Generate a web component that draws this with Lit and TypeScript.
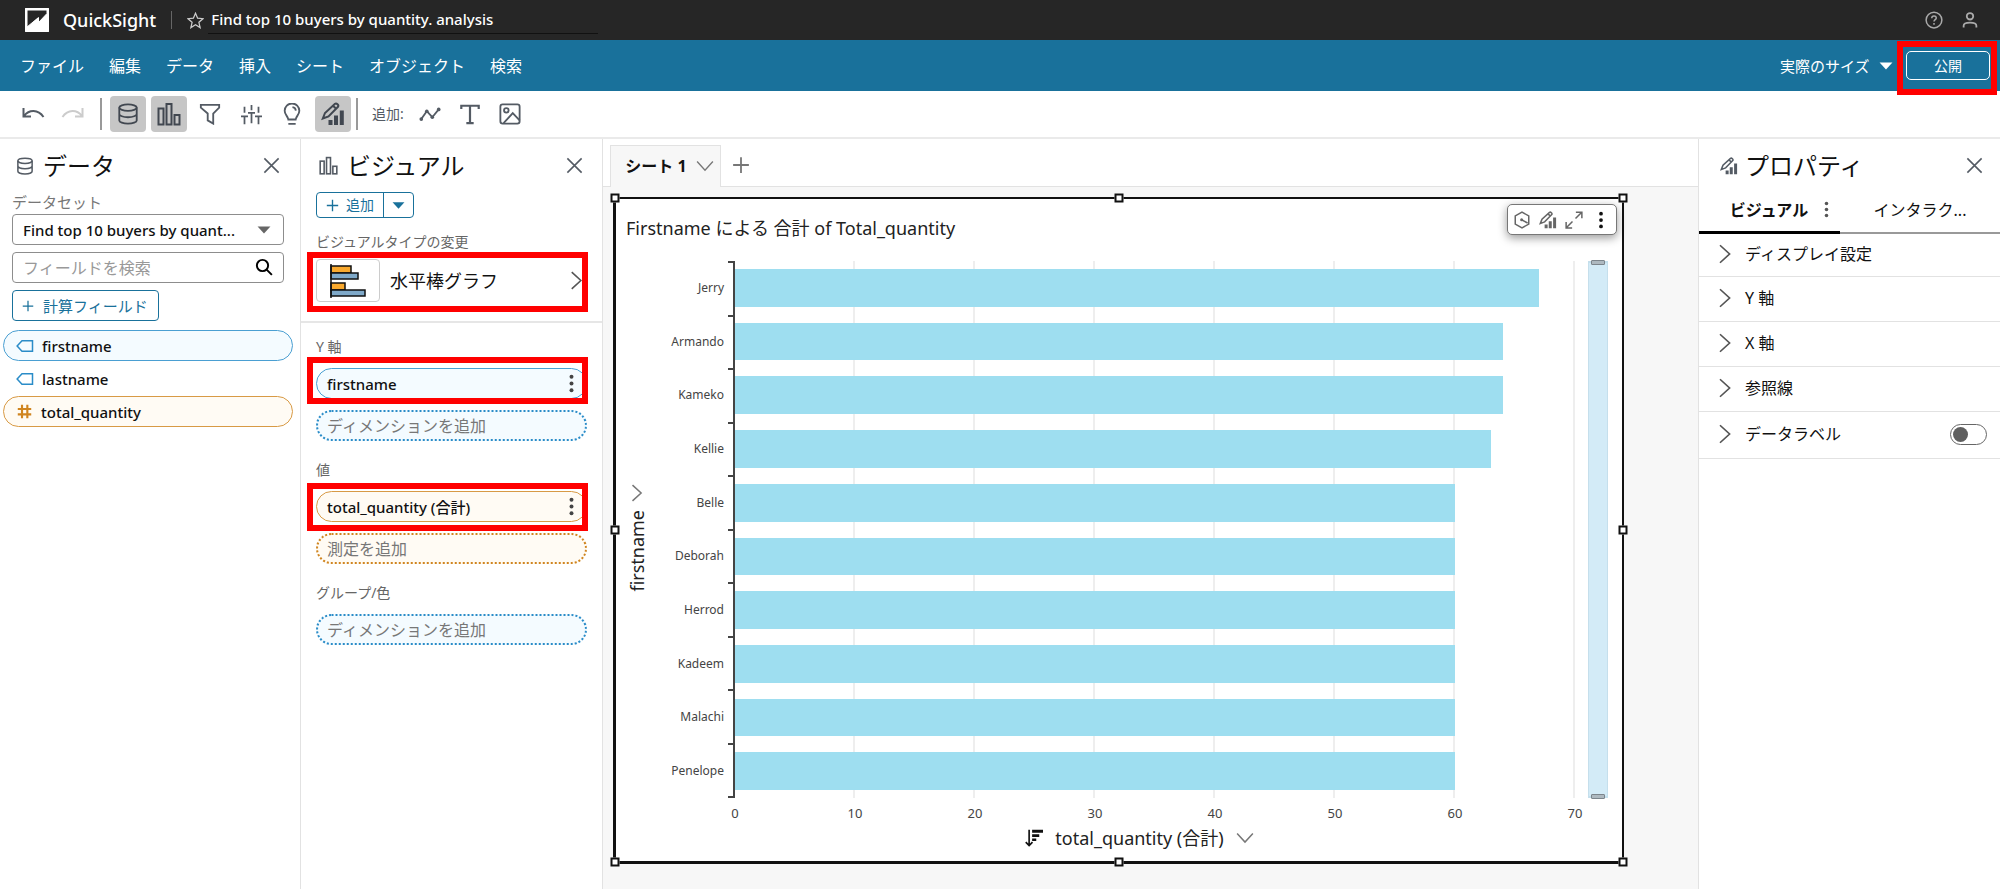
import { LitElement, html, css, svg, nothing } from "lit";
import { customElement, property } from "lit/decorators.js";

const shared = css`
  *, *::before, *::after { box-sizing: border-box; }
  button, input, select { font: inherit; color: inherit; margin: 0; }
  button { background: none; border: 0; padding: 0; cursor: pointer; display: flex; align-items: center; justify-content: center; }
  svg { display: block; flex: none; fill: none; stroke: currentColor; }
  h1, h2, h3, ul { margin: 0; padding: 0; font-weight: 400; list-style: none; }
`;

const icons: Record<string, unknown> = {
  undo: svg`<path d="M2.500 6v8.500H10M3 14C8 7.500 17 7 22.500 15" stroke-width="2"/>`,
  redo: svg`<path d="M21.500 6v8.500H14M21 14C16 7.500 7 7 1.500 15" stroke-width="2"/>`,
  data: svg`<ellipse cx="12" cy="5" rx="9.500" ry="3.500"/><path d="M2.500 5v14c0 1.900 4.200 3.500 9.500 3.500s9.500-1.600 9.500-3.500V5M2.500 12c0 1.900 4.200 3.500 9.500 3.500s9.500-1.600 9.500-3.500"/>`,
  visual: svg`<rect x="1.500" y="6.500" width="5" height="16"/><rect x="9.500" y="2" width="5" height="20.500"/><rect x="17.500" y="13" width="5" height="9.500"/>`,
  filter: svg`<path d="M2 2h20v3l-6.500 6.500v11l-6-3.500v-7.500L2 5z"/>`,
  sliders: svg`<path d="M4 3v7M0 14h8M4 14v9M12 1v6M8 10h8M12 10v12M20 3v7M16 14h8M20 14v9"/>`,
  bulb: svg`<path d="M8 18c-.5-4-4-5-4-9.500a8 8 0 0 1 16 0c0 4.500-3.500 5.500-4 9.500zM8 22.800h8M12.500 4.500c2 .3 3.500 1.800 3.700 3.800"/>`,
  props: svg`<path d="M1.800 16.500 4 11 14 1.800c1.500-1 4.200 1.400 3 3L7.500 14.500zM12 3.800l3.200 3"/><path fill="currentColor" stroke="none" d="M7.500 18h4v5h-4zM13 13.500h4V23h-4zM18.800 8.500h4V23h-4z"/>`,
  line: svg`<path d="M2.500 17.500 8.500 9l6 6.500L21.500 7" stroke-width="2"/><g fill="currentColor" stroke="none"><circle cx="2.500" cy="17.500" r="2"/><circle cx="8.500" cy="9" r="2"/><circle cx="14.500" cy="15.500" r="2"/><circle cx="21.500" cy="7" r="2"/></g>`,
  text: svg`<path d="M2.500 6.500V3h19v3.500M12 3v19M8 22h8" stroke-width="2.400"/>`,
  image: svg`<rect x="1.500" y="1.500" width="21" height="21" rx="2.500"/><circle cx="8" cy="8" r="2.500"/><path d="m5 22 10-11 7.500 8"/>`,
  close: svg`<path d="m3 3 18 18M21 3 3 21"/>`,
  help: svg`<circle cx="12" cy="12" r="10.500"/><path d="M9 9.500c0-3.800 6-3.800 6-.3 0 2.300-3 2.300-3 4.800M12 16v2.200"/>`,
  user: svg`<circle cx="12" cy="7" r="4.300"/><path d="M3.500 22v-2.500c0-5.500 17-5.500 17 0V22"/>`,
  star: svg`<path d="m12 1.800 3 7 7.500.7-5.700 5 1.700 7.500-6.500-4-6.500 4 1.700-7.500-5.700-5 7.500-.7z"/>`,
  search: svg`<circle cx="10" cy="10" r="7.500"/><path d="m15.500 15.500 7 7"/>`,
  tag: svg`<path d="M8 5h14v14H8l-6.500-7z"/>`,
  hash: svg`<path d="M8.500 2.500v19M16 2.500v19M2.500 8.500h19M2.500 16h19"/>`,
  plus: svg`<path d="M12 1.500v21M1.500 12h21"/>`,
  caret: svg`<path fill="currentColor" stroke="none" d="M1 6h22L12 18z"/>`,
  right: svg`<path d="m6 1.500 11.500 10.500L6 22.500"/>`,
  down: svg`<path d="m1.500 6 10.500 11.500L22.500 6"/>`,
  dots: svg`<g fill="currentColor" stroke="none"><circle cx="12" cy="3.500" r="2.500"/><circle cx="12" cy="12" r="2.500"/><circle cx="12" cy="20.500" r="2.500"/></g>`,
  hexagon: svg`<path d="m12 1.500 9 5v11l-9 5-9-5v-11zM11 11.500l8.500 4.500"/><circle cx="11.500" cy="11.500" r="2" fill="currentColor" stroke="none"/>`,
  expand: svg`<path d="M14 10 22 2M14.500 1.500h8v8M10 14l-8 8M1.500 14.500v8h8"/>`,
  sort: svg`<path d="M5.500 1v21M1 17.500l4.500 4.500 4.500-4.500" stroke-width="2.200"/><path fill="currentColor" stroke="none" d="M9.500 1H24v4H9.500zM9.500 7H19v3.500H9.500zM9.500 12.500H15v3.500H9.500z"/>`,
};

const icon = (name: string, size = 24, stroke = 2) =>
  svg`<svg width=${size} height=${size} viewBox="0 0 24 24" stroke-width=${stroke} aria-hidden="true">${icons[name]}</svg>`;

interface Datum { name: string; value: number; }

@customElement("quantity-chart")
class QuantityChart extends LitElement {
  @property({ attribute: false }) data: Datum[] = [];
  @property({ type: Number }) max = 70;

  static styles = [shared, css`
    :host { flex: 1; display: grid; grid-template-columns: 24px 75px 1fr; grid-template-rows: 1fr auto auto; color: #222; }
    .y-title { grid-row: 1; align-self: center; justify-self: center; display: flex; flex-direction: column; align-items: center; gap: 8px; padding-top: 16px; font-size: 18px; line-height: 24px; }
    .y-title span { writing-mode: vertical-rl; transform: rotate(180deg); }
    .y-title svg, .x-title .chev { color: #777; }
    .names { display: flex; flex-direction: column; font-size: 12px; color: #444; text-align: right; }
    .names li { flex: 1; display: flex; align-items: center; justify-content: flex-end; }
    .plot { display: grid; grid-template-columns: 7px 1fr 24px; padding-left: 4px; }
    .ticks { border-right: 2px solid #444; border-bottom: 2px solid #444; display: flex; flex-direction: column; }
    .ticks i { flex: 1; border-top: 2px solid #444; }
    .area { display: grid; margin-right: 13px; }
    .lines, .bars { grid-area: 1 / 1; display: flex; }
    .lines i { flex: 1; border-right: 2px solid #eee; }
    .bars { flex-direction: column; }
    .bars li { flex: 1; display: flex; padding: 8px 0; }
    .bar { background: #9edef0; }
    .scroll { width: 20px; border: 1px solid #c5dfec; border-width: 2px 1px; background: #d3ebf7; display: flex; flex-direction: column; align-items: center; justify-content: space-between; }
    .grip { width: 14px; height: 5px; margin: -3px 0; border: 1px solid #7c858c; background: #aeb9c0; border-radius: 1px; }
    .numbers { grid-column: 3; display: flex; justify-content: space-between; margin: 6px 27px 0 1px; font-size: 13px; line-height: 18px; color: #444; }
    .numbers li { width: 20px; text-align: center; }
    .x-title { grid-column: 3; display: flex; align-items: center; justify-content: center; gap: 12px; font-size: 18px; line-height: 32px; padding-right: 57px; }
    .x-title svg { color: #111; }
  `];

  render() {
    const marks = Array.from({ length: this.max / 10 + 1 }, (_, i) => i * 10);
    return html`
      <div class="y-title">${icon("right", 18, 2)}<span>firstname</span></div>
      <ul class="names">${this.data.map((d) => html`<li>${d.name}</li>`)}</ul>
      <div class="plot">
        <div class="ticks">${this.data.map(() => html`<i></i>`)}</div>
        <div class="area">
          <div class="lines">${marks.slice(1).map(() => html`<i></i>`)}</div>
          <ul class="bars">
            ${this.data.map((d) => html`<li><div class="bar" style="width:${(d.value / this.max) * 100}%"></div></li>`)}
          </ul>
        </div>
        <div class="scroll"><div class="grip"></div><div class="grip"></div></div>
      </div>
      <ul class="numbers">${marks.map((m) => html`<li>${m}</li>`)}</ul>
      <div class="x-title">${icon("sort", 18)}<span>total_quantity (合計)</span><svg class="chev" width="18" height="18" viewBox="0 0 24 24" stroke-width="2">${icons.down}</svg></div>
    `;
  }
}

@customElement("app-root")
class AppRoot extends LitElement {
  private people: Datum[] = [
    { name: "Jerry", value: 67 }, { name: "Armando", value: 64 }, { name: "Kameko", value: 64 },
    { name: "Kellie", value: 63 }, { name: "Belle", value: 60 }, { name: "Deborah", value: 60 },
    { name: "Herrod", value: 60 }, { name: "Kadeem", value: 60 }, { name: "Malachi", value: 60 },
    { name: "Penelope", value: 60 },
  ];

  static styles = [shared, css`
    :host { display: flex; flex-direction: column; min-height: 100vh; background: #fff; color: #111; font: 15px/20px "Noto Sans", "Noto Sans CJK JP", sans-serif; }
    .top { height: 40px; background: #262626; color: #fff; display: flex; align-items: center; padding: 0 21px 0 25px; }
    .brand { font-size: 18px; font-weight: 500; margin-left: 14px; }
    .rule { width: 1px; height: 18px; background: #666; margin: 0 15px; }
    .top .star { color: #ccc; margin-right: 4px; }
    .name { align-self: stretch; width: 390px; height: 34px; font-size: 15px; line-height: 38px; padding-left: 3px; border-bottom: 1px solid #111; font-weight: 500; }
    .account { margin-left: auto; display: flex; gap: 18px; color: #aaa; }
    .menu { height: 51px; background: #19719b; color: #fff; display: flex; align-items: center; padding: 0 10px 0 20px; }
    .menu nav { display: flex; gap: 25px; font-size: 16px; }
    .menu a { color: inherit; text-decoration: none; }
    .size { margin-left: auto; display: flex; align-items: center; gap: 8px; }
    .size select { appearance: none; background: none; border: 0; padding: 0; }
    .publish { position: relative; margin-left: 13px; }
    .publish button { width: 84px; height: 29px; border: 1px solid #fff; border-radius: 5px; font-size: 14px; }
    .mark::after { content: ""; position: absolute; border: 6px solid #f00; pointer-events: none; inset: -10px -7px -15px -9px; }
    .tools { height: 48px; border-bottom: 2px solid #eaeaea; display: flex; align-items: center; padding-left: 20px; color: #545b64; }
    .tools button { width: 36px; height: 36px; border-radius: 4px; margin-right: 5px; }
    .tools .plain { width: 26px; margin-right: 14px; }
    .tools .faded { color: #ccc; }
    .tools .on { background: #c6c6c6; color: #414750; }
    .tools .sep { width: 2px; height: 32px; background: #999; margin-right: 8px; }
    .tools .add { margin: 0 8px 0 6px; font-size: 14px; width: 32px; white-space: nowrap; }
    .tools .item { margin-right: 4px; }
    .work { flex: 1; display: grid; grid-template-columns: 301px 302px 1fr 302px; }
    .panel { border-right: 1px solid #e2e2e2; display: flex; flex-direction: column; }
    .head { display: flex; align-items: center; gap: 9px; height: 53px; padding: 0 19px 0 16px; color: #545b64; }
    .head h2 { font-size: 24px; line-height: 32px; color: #111; flex: 1; }
    .fields { padding: 0 16px 0 12px; display: flex; flex-direction: column; align-items: flex-start; gap: 7px; color: #111; }
    .fields label { color: #777; margin-bottom: -5px; line-height: 20px; }
    .box { width: 100%; height: 31px; position: relative; display: flex; }
    .box select, .box input { appearance: none; width: 100%; border: 1px solid #8d8d8d; border-radius: 4px; background: #fff; padding: 0 30px 0 10px; }
    .box select { font-weight: 500; }
    .box input { font-size: 16px; }
    .box input::placeholder { color: #999; opacity: 1; }
    .box svg { position: absolute; right: 13px; top: 9px; color: #666; pointer-events: none; }
    .box .dark { color: #000; right: 11px; top: 6px; }
    .calc { height: 31px; border: 1px solid #19719b; border-radius: 4px; color: #19719b; padding: 0 10px 0 9px; gap: 9px; }
    .list { padding: 9px 7px 0 3px; display: flex; flex-direction: column; gap: 2px; }
    .list li { height: 31px; border: 1px solid transparent; border-radius: 16px; display: flex; align-items: center; gap: 8px; padding-left: 12px; font-weight: 500; }
    .dim svg { color: #2a8cc8; }
    .mea svg { color: #d08520; }
    .list .used.dim, .pill.dim { border-color: #4a9fd2; background: #f4fbff; }
    .list .used.mea, .pill.mea { border-color: #d89a45; background: #fffbf4; }
    .head.vis { padding: 0 18px; }
    .head.pro { padding: 0 16px 0 21px; gap: 7px; }
    .split { display: flex; height: 26px; align-self: flex-start; border: 1px solid #19719b; border-radius: 4px; margin-left: 15px; color: #19719b; font-size: 14px; }
    .split button { padding: 0 9px; gap: 7px; }
    .split button + button { border-left: 1px solid #19719b; padding: 0 8px; }
    .small { font-size: 14px; color: #666; font-weight: 400; }
    .type { padding: 14px 15px 19px; border-bottom: 2px solid #e6e6e6; display: flex; flex-direction: column; gap: 7px; }
    .kind { position: relative; display: flex; align-items: center; text-align: left; height: 43px; width: 100%; justify-content: flex-start; font-size: 18px; }
    .kind.mark::after { inset: -7px -1px -10px -9px; }
    .kind .chev { margin-left: auto; margin-right: 1px; color: #555; }
    .thumb { width: 64px; height: 43px; border: 1px solid #ccc; border-radius: 4px; margin-right: 10px; display: flex; align-items: center; justify-content: center; }
    .wells { padding: 14px 15px 0; display: flex; flex-direction: column; gap: 19px; }
    .well { display: flex; flex-direction: column; gap: 11px; }
    .well .drop { width: 100%; height: 31px; border: 2px dotted; border-radius: 16px; justify-content: flex-start; padding-left: 9px; font-size: 16px; }
    .drop span { color: #777; }
    .drop.dim { color: #2a8cc8; background: #f4fbff; }
    .drop.mea { color: #d08520; background: #fffbf4; }
    .pill { position: relative; height: 31px; border: 1px solid; border-radius: 16px; display: flex; align-items: center; justify-content: space-between; padding: 0 5px 0 10px; font-weight: 500; }
    .pill svg { color: #444; }
    .pill.mark::after { inset: -12px -2px -6px -10px; }
    .pill.mea.mark::after { inset: -9px -2px -10px -10px; }
    .canvas { background: #f7f7f7; display: flex; flex-direction: column; }
    .sheets { height: 48px; padding: 6px 0 0 7px; background: #fff; border-bottom: 1px solid #e2e2e2; display: flex; }
    .sheet { height: 42px; width: 111px; border: 1px solid #e2e2e2; border-bottom: 0; background: #f7f7f7; font-size: 16px; font-weight: 700; gap: 9px; padding: 0 0 2px 8px; }
    .sheet svg, .new svg { color: #777; }
    .new { padding: 0 11px 2px; }
    .stage { flex: 1; display: flex; padding: 10px 74px 25px 10px; }
    .card { position: relative; flex: 1; display: flex; flex-direction: column; background: #fff; border: 2px solid #111; border-left-width: 3px; border-bottom-width: 3px; padding: 14px 10px 7px 9px; }
    .card h3 { font-size: 18px; line-height: 30px; color: #222; padding-left: 1px; margin-bottom: 18px; }
    .handle { position: absolute; width: 9px; height: 9px; border: 2px solid #111; background: #fff; transform: translate(-50%, -50%); }
    .n { top: -1px; } .m { top: 50%; } .s { top: calc(100% + 1px); }
    .w { left: -1px; } .c { left: 50%; } .e { left: calc(100% + 1px); }
    .float { position: absolute; top: 5px; right: 5px; height: 31px; width: 110px; border: 1px solid #777; border-radius: 5px; background: #fff; box-shadow: 0 3px 10px #0006; display: flex; align-items: center; gap: 8px; padding-left: 5px; color: #666; }
    .float .more { color: #111; margin-left: 1px; }
    .side { border-left: 1px solid #e2e2e2; }
    .tabs { display: flex; height: 42px; font-size: 16px; }
    .tabs button { flex: 1; border-bottom: 2px solid #999; padding-bottom: 4px; }
    .tabs .active { flex: none; width: 141px; border-bottom: 3px solid #000; font-weight: 700; gap: 10px; padding-left: 26px; }
    .tabs .active svg { color: #555; }
    .row { height: 45px; border-bottom: 1px solid #e2e2e2; display: flex; align-items: center; padding: 0 13px 2px 16px; }
    .row button { gap: 10px; font-size: 16px; }
    .row:first-child { height: 43px; }
    .row:last-child { height: 47px; }
    .row svg { color: #555; }
    .toggle { appearance: none; margin-left: auto; width: 37px; height: 21px; border: 1px solid #666; border-radius: 11px; display: flex; align-items: center; padding: 2px; }
    .toggle::before { content: ""; width: 15px; height: 15px; border-radius: 50%; background: #5f5f5f; }
  `];

  private tool(name: string, label: string, cls = "", size = 24) {
    return html`<button class=${cls} aria-label=${label}>${icon(name, size, 2)}</button>`;
  }

  private well(label: string, kind: string, add: string, value?: string) {
    return html`<div class="well">
      <span class="small">${label}</span>
      ${value ? html`<div class="pill mark ${kind}"><span>${value}</span>${icon("dots", 19)}</div>` : nothing}
      <button class="drop ${kind}"><span>${add}</span></button>
    </div>`;
  }

  render() {
    return html`
      <header class="top">
        <svg width="24" height="24" viewBox="0 0 24 24" stroke="none"><rect width="24" height="24" rx="1" fill="#fff"/><path fill="#262626" d="M2 2h20v3.500L13.500 14.500V9.500L2 19z"/><path fill="#fff" d="m4 19 9-9v6l9-8v14H2z"/></svg>
        <span class="brand">QuickSight</span><span class="rule"></span>
        <button class="star" aria-label="お気に入り">${icon("star", 17, 1.8)}</button>
        <h1 class="name">Find top 10 buyers by quantity. analysis</h1>
        <div class="account">
          <button aria-label="ヘルプ">${icon("help", 18)}</button>
          <button aria-label="アカウント">${icon("user", 18, 2.4)}</button>
        </div>
      </header>
      <div class="menu">
        <nav>${["ファイル", "編集", "データ", "挿入", "シート", "オブジェクト", "検索"].map((t) => html`<a href="#">${t}</a>`)}</nav>
        <div class="size"><select aria-label="表示サイズ"><option>実際のサイズ</option></select>${icon("caret", 14)}</div>
        <div class="publish mark"><button>公開</button></div>
      </div>
      <div class="tools">
        ${this.tool("undo", "元に戻す", "plain")}${this.tool("redo", "やり直す", "plain faded")}
        <span class="sep"></span>
        ${this.tool("data", "データ", "on", 22)}${this.tool("visual", "ビジュアル", "on")}${this.tool("filter", "フィルター", "", 22)}
        ${this.tool("sliders", "パラメータ", "", 21)}${this.tool("bulb", "インサイト", "", 22)}${this.tool("props", "プロパティ", "on")}
        <span class="sep"></span><span class="add">追加:</span>
        ${this.tool("line", "ビジュアルを追加", "item", 22)}${this.tool("text", "テキストを追加", "item", 22)}${this.tool("image", "画像を追加", "item", 22)}
      </div>
      <main class="work">
        <section class="panel">
          <div class="head">${icon("data", 18)}<h2>データ</h2><button aria-label="閉じる">${icon("close", 19, 2)}</button></div>
          <div class="fields">
            <label for="dataset">データセット</label>
            <div class="box"><select id="dataset"><option>Find top 10 buyers by quant...</option></select>${icon("caret", 14)}</div>
            <div class="box"><input aria-label="フィールドを検索" placeholder="フィールドを検索"><svg class="dark" width="18" height="18" viewBox="0 0 24 24" stroke-width="2.600">${icons.search}</svg></div>
            <button class="calc">${icon("plus", 12, 2.5)}計算フィールド</button>
          </div>
          <ul class="list">
            <li class="used dim">${icon("tag", 18)}firstname</li>
            <li class="dim">${icon("tag", 18)}lastname</li>
            <li class="used mea">${icon("hash", 17, 3)}total_quantity</li>
          </ul>
        </section>
        <section class="panel">
          <div class="head vis">${icon("visual", 19)}<h2>ビジュアル</h2><button aria-label="閉じる">${icon("close", 19, 2)}</button></div>
          <div class="split"><button>${icon("plus", 13, 2.5)}追加</button><button aria-label="その他の追加">${icon("caret", 13)}</button></div>
          <div class="type">
            <span class="small">ビジュアルタイプの変更</span>
            <button class="kind mark">
              <span class="thumb"><svg width="36" height="34" viewBox="0 0 36 34" stroke="#222" stroke-width="1.500"><path fill="#f9a92e" d="M1 2h20v7H1zM1 19h14v7H1z"/><path fill="#7fa9c9" d="M1 9h27v6H1zM1 26h34v6H1z"/><path d="M1 0v34"/></svg></span>
              水平棒グラフ
              <svg class="chev" width="19" height="19" viewBox="0 0 24 24" stroke-width="2">${icons.right}</svg>
            </button>
          </div>
          <div class="wells">
            ${this.well("Y 軸", "dim", "ディメンションを追加", "firstname")}
            ${this.well("値", "mea", "測定を追加", "total_quantity (合計)")}
            ${this.well("グループ/色", "dim", "ディメンションを追加")}
          </div>
        </section>
        <section class="canvas">
          <div class="sheets"><button class="sheet">シート 1 ${icon("down", 18, 1.8)}</button><button class="new" aria-label="シートを追加">${icon("plus", 18, 2.4)}</button></div>
          <div class="stage">
            <article class="card">
              <h3>Firstname による 合計 of Total_quantity</h3>
              <quantity-chart .data=${this.people}></quantity-chart>
              <div class="float">
                <button aria-label="操作">${icon("hexagon", 18)}</button><button aria-label="書式">${icon("props", 18)}</button>
                <button aria-label="最大化">${icon("expand", 18)}</button><button class="more" aria-label="メニュー">${icon("dots", 18)}</button>
              </div>
              ${["n w", "n c", "n e", "m w", "m e", "s w", "s c", "s e"].map((p) => html`<span class="handle ${p}"></span>`)}
            </article>
          </div>
        </section>
        <section class="side">
          <div class="head pro">${icon("props", 18)}<h2>プロパティ</h2><button aria-label="閉じる">${icon("close", 19, 2)}</button></div>
          <div class="tabs"><button class="active">ビジュアル${icon("dots", 17)}</button><button>インタラク...</button></div>
          <div>
            ${["ディスプレイ設定", "Y 軸", "X 軸", "参照線"].map((t) => html`<div class="row"><button>${icon("right", 20)}${t}</button></div>`)}
            <div class="row"><button>${icon("right", 20)}データラベル</button><input class="toggle" type="checkbox" role="switch" aria-label="データラベル"></div>
          </div>
        </section>
      </main>
    `;
  }
}
